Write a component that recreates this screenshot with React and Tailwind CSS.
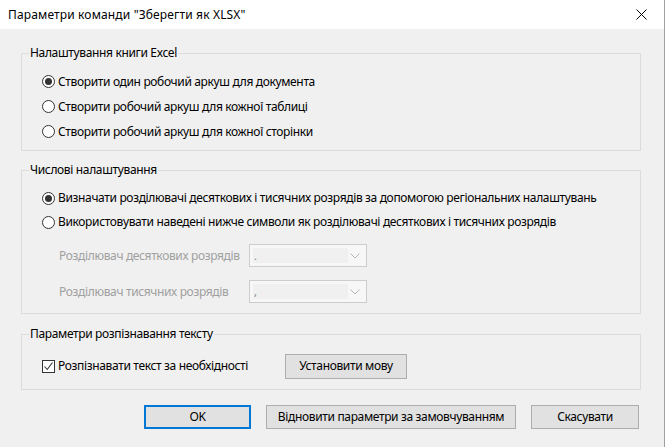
import { useState } from 'react';

const font = { fontFamily: '"Noto Sans", "Liberation Sans", sans-serif' };

function Radio({ checked, label, onClick }) {
  return (
    <div className="flex items-center h-[25px] cursor-default" onClick={onClick}>
      <span className="w-[13px] h-[13px] rounded-full border border-[#333333] bg-white flex items-center justify-center shrink-0">
        {checked && <span className="w-[7px] h-[7px] rounded-full bg-[#333333]" />}
      </span>
      <span className="ml-[3px] text-[12px] text-black whitespace-nowrap">{label}</span>
    </div>
  );
}

function Group({ title, className, children }) {
  return (
    <fieldset className={`border border-[#dcdcdc] ${className}`}>
      <legend className="ml-[7px] px-[1px] text-[12px] leading-[16px] text-black">{title}</legend>
      {children}
    </fieldset>
  );
}

function Combo({ value }) {
  return (
    <div className="w-[118px] h-[23px] border border-[#cccccc] bg-[#f7f7f7] flex items-center pl-[3px] pr-[6px]">
      <div className="w-[95px] h-[15px] bg-[#f0f0f0] text-[11px] leading-[15px] text-[#7a8aa8] pl-[1px]">{value}</div>
      <svg className="ml-auto" width="10" height="6" viewBox="0 0 10 6">
        <path d="M0.5 0.5 L5 5 L9.5 0.5" fill="none" stroke="#b5b5b5" strokeWidth="1" />
      </svg>
    </div>
  );
}

function Button({ children, primary, className }) {
  return (
    <button
      className={`bg-[#e1e1e1] text-[12px] text-black ${primary ? 'border-2 border-[#0078d7]' : 'border border-[#adadad]'} ${className}`}
    >
      {children}
    </button>
  );
}

export default function App() {
  const [sheet, setSheet] = useState(0);
  const [num, setNum] = useState(0);
  const [ocr, setOcr] = useState(true);

  return (
    <div className="w-[665px] h-[447px] bg-[#f0f0f0] border-r border-[#a0a0a0] select-none" style={font}>
      {/* Title bar */}
      <div className="h-[29px] bg-white flex items-center pl-[8px] pr-[17px]">
        <span className="text-[12px] text-black tracking-[0.15px]">Параметри команди "Зберегти як XLSX"</span>
        <svg className="ml-auto" width="11" height="11" viewBox="0 0 11 11">
          <path d="M0.5 0.5 L10.5 10.5 M10.5 0.5 L0.5 10.5" stroke="#000" strokeWidth="1" />
        </svg>
      </div>

      <div className="pl-[21px] pr-[23px] pt-[16px] tracking-[-0.35px]">
        <Group title="Налаштування книги Excel" className="h-[106px]">
          <div className="pl-[20px] pt-[8px]">
            <Radio checked={sheet === 0} onClick={() => setSheet(0)} label="Створити один робочий аркуш для документа" />
            <Radio checked={sheet === 1} onClick={() => setSheet(1)} label="Створити робочий аркуш для кожної таблиці" />
            <Radio checked={sheet === 2} onClick={() => setSheet(2)} label="Створити робочий аркуш для кожної сторінки" />
          </div>
        </Group>

        <Group title="Числові налаштування" className="mt-[11px] h-[152px]">
          <div className="pl-[20px] pt-[8px]">
            <div className="[&>div]:h-[24px]">
              <Radio
                checked={num === 0}
                onClick={() => setNum(0)}
                label="Визначати розділювачі десяткових і тисячних розрядів за допомогою регіональних налаштувань"
              />
              <Radio
                checked={num === 1}
                onClick={() => setNum(1)}
                label="Використовувати наведені нижче символи як розділювачі десяткових і тисячних розрядів"
              />
            </div>
            <div className="mt-[10px] pl-[17px] flex flex-col gap-[13px]">
              <div className="flex items-center">
                <span className="w-[190px] text-[12px] text-[#a0a0a0] whitespace-nowrap">Розділювач десяткових розрядів</span>
                <Combo value="." />
              </div>
              <div className="flex items-center">
                <span className="w-[190px] text-[12px] text-[#a0a0a0] whitespace-nowrap">Розділювач тисячних розрядів</span>
                <Combo value="," />
              </div>
            </div>
          </div>
        </Group>

        <Group title="Параметри розпізнавання тексту" className="mt-[12px] h-[64px]">
          <div className="pl-[20px] pr-[233px] flex items-center h-[40px] mt-[4px]">
            <div className="flex items-center cursor-default" onClick={() => setOcr(!ocr)}>
              <span className="w-[13px] h-[13px] border border-[#333333] bg-white flex items-center justify-center">
                {ocr && (
                  <svg width="11" height="11" viewBox="0 0 11 11">
                    <path d="M1.5 5.5 L4.2 8.5 L9.5 1.5" fill="none" stroke="#333" strokeWidth="1.1" />
                  </svg>
                )}
              </span>
              <span className="ml-[3px] text-[12px] text-black whitespace-nowrap">Розпізнавати текст за необхідності</span>
            </div>
            <Button className="ml-auto w-[122px] h-[25px]">Установити мову</Button>
          </div>
        </Group>

        <div className="mt-[15px] flex justify-end gap-[15px] pr-[2px]">
          <Button primary className="w-[107px] h-[24px]">OK</Button>
          <Button className="w-[250px] h-[24px]">Відновити параметри за замовчуванням</Button>
          <Button className="w-[108px] h-[24px]">Скасувати</Button>
        </div>
      </div>
    </div>
  );
}
